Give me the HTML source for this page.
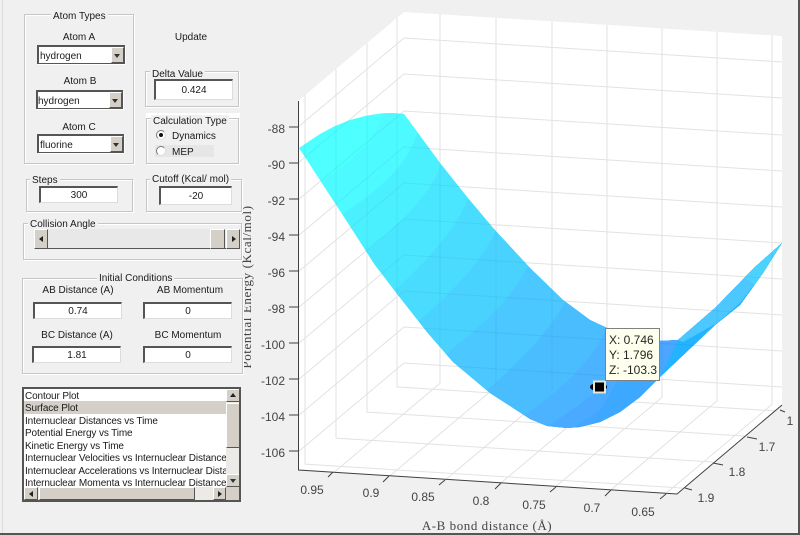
<!DOCTYPE html>
<html><head><meta charset="utf-8"><style>
html,body{margin:0;padding:0;background:#f0f0f0;width:800px;height:535px;overflow:hidden}
#r{position:relative;width:800px;height:535px;overflow:hidden;background:#f0f0f0;font-family:"Liberation Sans",sans-serif;font-size:10px;color:#1a1a1a;filter:blur(.3px)}
#r div{position:absolute;box-sizing:border-box}
.t{white-space:nowrap;height:12px;line-height:14px}
.c{width:120px;text-align:center}
.f{border:1px solid #c6c6c6;box-shadow:1px 1px 0 #fff,inset 1px 1px 0 #fff}
.l{background:#f0f0f0;padding:0 2px;white-space:nowrap;height:12px;line-height:14px}
.e{background:#fff;border-top:2px solid #555;border-left:2px solid #555;border-right:1px solid #dcdcdc;border-bottom:1px solid #dcdcdc;text-align:center;white-space:nowrap}
.p{background:#fff;border:1px solid #555;border-top:2px solid #555;border-left:2px solid #555;box-shadow:1px 1px 0 #fff;line-height:19px;white-space:nowrap;overflow:hidden}
.b{background:#d4d0c8;border-top:1px solid #fff;border-left:1px solid #fff;border-right:1px solid #555;border-bottom:1px solid #555}
.u{width:0;height:0;border-left:3px solid transparent;border-right:3px solid transparent;border-top:4px solid #333}
.ut{width:0;height:0;border-left:3px solid transparent;border-right:3px solid transparent;border-bottom:4px solid #222}
.lf{width:0;height:0;border-top:3px solid transparent;border-bottom:3px solid transparent;border-right:4px solid #222}
.rt{width:0;height:0;border-top:3px solid transparent;border-bottom:3px solid transparent;border-left:4px solid #222}
.ra{width:10px;height:10px;border-radius:50%;background:#fff;border:1px solid #777;border-right-color:#ddd;border-bottom-color:#ddd}
.li{left:1px;white-space:nowrap;height:12px;line-height:14px;letter-spacing:-.13px}
</style></head><body><div id="r">

<svg width="800" height="535" viewBox="0 0 800 535" style="position:absolute;left:0;top:0;display:block">
<defs>
<clipPath id="s"><path d="M299,148 320,134 335,126 350,120 365,116 380,113.5 392,113 404,114 440,163 467,197 493,228 530,268 563,300 590,320 605,327 640,342 678,340 715,308 755,267 782,243 763,273 740,305 715,325 660,377 640,397 620,412 600,422 580,427 567,428 547,426 530,419 490,393 453,362 427,332 398,295 375,265 348,223Z"/></clipPath>
</defs>
<polygon points="298,101 404,12 782,36 782,405 677,494 298,470" fill="#fff"/>
<g fill="none" stroke="#e2e2e2" stroke-width="1">
<path d="M298,127L404,38L782,62M298,163L404,74L782,98M298,200L404,111L782,135M298,236L404,147L782,171M298,272L404,183L782,207M298,308L404,219L782,243M298,344L404,255L782,279M298,380L404,291L782,315M298,416L404,327L782,351M298,452L404,363L782,387"/>
<path d="M440,14.3V383.3L334,472.3M496,17.8V386.8L390,475.8M552,21.4V390.4L446,479.4M607,24.9V393.9L501,482.9M662,28.4V397.4L556,486.4M717,31.9V400.9L611,489.9M772,35.4V404.4L666,493.4"/>
<path d="M305,95.1V464.1L683,488.1M336,69.1V438.1L714,462.1M367,43.1V412.1L745,436.1M397,17.9V386.9L775,410.9"/>
</g>

<g clip-path="url(#s)">
<rect x="280" y="100" width="520" height="340" fill="#4dffff"/>
<path d="M433,63L383,113Q372,150 323,180L280,230L900,600V-100Z" fill="#4dfaff"/>
<path d="M467,80L417,133Q405,175 343,213L300,270L900,600V-100Z" fill="#4bf0ff"/>
<path d="M490,107L440,167Q425,205 365,252L315,310L900,600V-100Z" fill="#4ae6ff"/>
<path d="M517,141L467,201Q450,240 395,290L345,350L900,600V-100Z" fill="#4adcff"/>
<path d="M545,172L495,232Q478,270 420,320L370,380L900,600V-100Z" fill="#4ad2ff"/>
<path d="M577,207L527,267Q510,305 448,352L398,412L900,600V-100Z" fill="#4ac8ff"/>
<path d="M615,242L565,302Q545,340 487,390L437,450L900,600V-100Z" fill="#4abdff"/>
<path d="M657,270L607,327Q590,370 522,417L472,477L900,600V-100Z" fill="#4bb3ff"/>
<path d="M680,290L640,342Q620,375 607,383Q580,405 550,425L500,485L900,600V-100Z" fill="#4aaaff"/>
<path d="M680,342L655,365Q625,395 607,405Q590,417 572,428L540,470L900,600V-100Z" fill="#45a6ff"/>
<polygon points="612,425 660,377 683,342 640,342 590,428" fill="#3da8ff"/>
<polygon points="640,330 690,330 660,377 640,375" fill="#4ba6ff"/>
<polygon points="600,440 660,377 678,340 717,323 740,303 763,273 782,243 790,300 700,400" fill="#24b4ff"/>
<polygon points="678,340 715,308 755,267 782,243 760,277 740,303 717,323 683,342" fill="#4cc8ff"/>
<polygon points="745,278 755,267 782,243 763,273 755,285" fill="#4cd2ff"/>
</g>
<g clip-path="url(#s)" fill="none" stroke="#000" stroke-opacity=".05" stroke-width="1">
<path d="M298,127L404,38L782,62M298,163L404,74L782,98M298,200L404,111L782,135M298,236L404,147L782,171M298,272L404,183L782,207M298,308L404,219L782,243M298,344L404,255L782,279M298,380L404,291L782,315M298,416L404,327L782,351M298,452L404,363L782,387"/>
<path d="M440,14.3V383.3M496,17.8V386.8M552,21.4V390.4M607,24.9V393.9M662,28.4V397.4M717,31.9V400.9M772,35.4V404.4M305,95.1V464.1M336,69.1V438.1M367,43.1V412.1M397,17.9V386.9"/>
</g>

<g fill="none" stroke="#404040" stroke-width="1">
<path d="M298.5,101V470L677,494L782,405"/>
<path d="M298,127H289M298,163H289M298,199H289M298,235H289M298,271H289M298,307H289M298,343H289M298,379H289M298,415H289M298,451H289"/>
<path d="M333,472L328,477M389,476L383,482M445,480L439,485M501,483L495,489M556,487L550,492M611,490L605,496M666,494L660,499"/>
<path d="M685,488L692,490M713,463L723,465M747,437L757,439M780,410L785,412"/>
</g>
<g font-family="Liberation Sans,sans-serif" font-size="12" fill="#444" text-anchor="end">
<text x="285" y="133">-88</text><text x="285" y="169">-90</text><text x="285" y="205">-92</text><text x="285" y="241">-94</text><text x="285" y="277">-96</text><text x="285" y="313">-98</text><text x="285" y="349">-100</text><text x="285" y="385">-102</text><text x="285" y="421">-104</text><text x="285" y="457">-106</text>
</g>
<g font-family="Liberation Sans,sans-serif" font-size="12" fill="#444" text-anchor="middle">
<text x="312" y="494">0.95</text><text x="371" y="497">0.9</text><text x="423" y="501">0.85</text><text x="481" y="505">0.8</text><text x="534" y="509">0.75</text><text x="592" y="512">0.7</text><text x="643" y="516">0.65</text>
<text x="706" y="502">1.9</text><text x="737" y="476">1.8</text><text x="767" y="451">1.7</text><text x="790" y="425">1</text>
</g>
<text x="487" y="530" font-family="Liberation Serif,serif" font-size="13" fill="#444" text-anchor="middle" letter-spacing=".55">A-B bond distance (Å)</text>
<text transform="translate(251,287) rotate(-90)" font-family="Liberation Serif,serif" font-size="13" fill="#444" text-anchor="middle" letter-spacing=".6">Potential Energy (Kcal/mol)</text>

<ellipse cx="598.5" cy="387" rx="8.5" ry="4" fill="#000"/>
<rect x="594" y="381.5" width="11" height="11" fill="#000" stroke="#e8e4d0" stroke-width="2"/>
<rect x="605.5" y="328.5" width="54" height="52" fill="#ffffee" stroke="#808080"/>
<g font-family="Liberation Sans,sans-serif" font-size="12" fill="#262626"><text x="609" y="344">X: 0.746</text><text x="609" y="359">Y: 1.796</text><text x="609" y="374">Z: -103.3</text></g>
<rect x="798" y="0" width="2" height="535" fill="#555"/>
<rect x="0" y="533" width="800" height="2" fill="#555"/>
<rect x="2" y="0" width="1" height="533" fill="#dcdcdc"/>
</svg>

<div class="f" style="left:24px;top:14px;width:110px;height:150px"></div>
<div class="l" style="left:51px;top:10px">Atom Types</div>
<div class="t c" style="left:19px;top:31px">Atom A</div>
<div class="p" style="left:37px;top:45px;width:88px;height:19px;padding-left:1px">hydrogen<div class="b" style="right:0;top:0;width:13px;height:16px"><div class="u" style="left:2px;top:6px"></div></div></div>
<div class="t c" style="left:20px;top:75px">Atom B</div>
<div class="p" style="left:36px;top:90px;width:87px;height:19px">hydrogen<div class="b" style="right:0;top:0;width:13px;height:16px"><div class="u" style="left:2px;top:6px"></div></div></div>
<div class="t c" style="left:19px;top:121px">Atom C</div>
<div class="p" style="left:37px;top:134px;width:87px;height:19px;padding-left:1px">fluorine<div class="b" style="right:0;top:0;width:13px;height:16px"><div class="u" style="left:2px;top:6px"></div></div></div>
<div class="t c" style="left:131px;top:31px">Update</div>

<div class="f" style="left:145px;top:71px;width:94px;height:36px"></div>
<div class="l" style="left:150px;top:68px">Delta Value</div>
<div class="e" style="left:154px;top:79px;width:79px;height:21px;line-height:20px">0.424</div>

<div style="left:146px;top:113px;width:94px;height:5px;background:#fff"></div>
<div class="f" style="left:146px;top:118px;width:93px;height:46px"></div>
<div class="l" style="left:151px;top:115px">Calculation Type</div>
<div class="ra" style="left:156px;top:130px"><div style="left:2px;top:2px;width:4px;height:4px;background:#111;border-radius:50%"></div></div>
<div class="t" style="left:172px;top:130px">Dynamics</div>
<div style="left:155px;top:145px;width:59px;height:12px;background:#e6e6e6"></div>
<div class="ra" style="left:156px;top:146px"></div>
<div class="t" style="left:172px;top:146px">MEP</div>

<div class="f" style="left:26px;top:179px;width:107px;height:33px"></div>
<div class="l" style="left:30px;top:174px">Steps</div>
<div class="e" style="left:39px;top:186px;width:79px;height:17px;line-height:16px">300</div>

<div class="f" style="left:146px;top:179px;width:96px;height:33px"></div>
<div class="l" style="left:150px;top:173px">Cutoff (Kcal/ mol)</div>
<div class="e" style="left:159px;top:186px;width:73px;height:19px;line-height:18px">-20</div>

<div class="f" style="left:23px;top:223px;width:219px;height:37px"></div>
<div class="l" style="left:28px;top:218px">Collision Angle</div>
<div style="left:34px;top:229px;width:206px;height:20px;background:#e8e8e8;border-bottom:1px solid #555"></div>
<div class="b" style="left:34px;top:229px;width:14px;height:20px"><div class="lf" style="left:4px;top:6px"></div></div>
<div class="b" style="left:210px;top:229px;width:15px;height:20px"></div>
<div class="b" style="left:226px;top:229px;width:14px;height:20px"><div class="rt" style="left:5px;top:6px"></div></div>

<div class="f" style="left:22px;top:278px;width:221px;height:96px"></div>
<div class="l" style="left:97px;top:272px">Initial Conditions</div>
<div class="t c" style="left:18px;top:284px">AB Distance (A)</div>
<div class="t c" style="left:130px;top:284px">AB Momentum</div>
<div class="e" style="left:33px;top:302px;width:89px;height:17px;line-height:16px">0.74</div>
<div class="e" style="left:143px;top:302px;width:89px;height:17px;line-height:16px">0</div>
<div class="t c" style="left:17px;top:329px">BC Distance (A)</div>
<div class="t c" style="left:128px;top:329px">BC Momentum</div>
<div class="e" style="left:32px;top:346px;width:89px;height:17px;line-height:16px">1.81</div>
<div class="e" style="left:143px;top:346px;width:89px;height:17px;line-height:16px">0</div>

<div style="left:22px;top:387px;width:219px;height:115px;background:#fff;border:2px solid #555;overflow:hidden">
<div style="left:0;top:12px;width:202px;height:13px;background:#d4d0c8"></div>
<div style="left:0;top:0;width:202px;height:98px;overflow:hidden">
<div class="li" style="top:1px">Contour Plot</div>
<div class="li" style="top:13px">Surface Plot</div>
<div class="li" style="top:26px">Internuclear Distances vs Time</div>
<div class="li" style="top:38px">Potential Energy vs Time</div>
<div class="li" style="top:51px">Kinetic Energy vs Time</div>
<div class="li" style="top:63px">Internuclear Velocities vs Internuclear Distance</div>
<div class="li" style="top:76px">Internuclear Accelerations vs Internuclear Distance</div>
<div class="li" style="top:88px">Internuclear Momenta vs Internuclear Distance</div>
</div>
<div style="left:202px;top:0;width:14px;height:98px;background:#eceae6"></div>
<div class="b" style="left:202px;top:0;width:14px;height:13px"><div class="ut" style="left:3px;top:3px"></div></div>
<div class="b" style="left:202px;top:14px;width:14px;height:45px"></div>
<div class="b" style="left:202px;top:85px;width:14px;height:13px"><div class="u" style="left:3px;top:4px"></div></div>
<div style="left:0;top:98px;width:202px;height:13px;background:#eceae6"></div>
<div class="b" style="left:0;top:98px;width:14px;height:13px"><div class="lf" style="left:4px;top:3px"></div></div>
<div class="b" style="left:15px;top:98px;width:156px;height:13px"></div>
<div class="b" style="left:189px;top:98px;width:13px;height:13px"><div class="rt" style="left:4px;top:3px"></div></div>
<div style="left:202px;top:98px;width:14px;height:13px;background:#d4d0c8"></div>
</div>

</div></body></html>
